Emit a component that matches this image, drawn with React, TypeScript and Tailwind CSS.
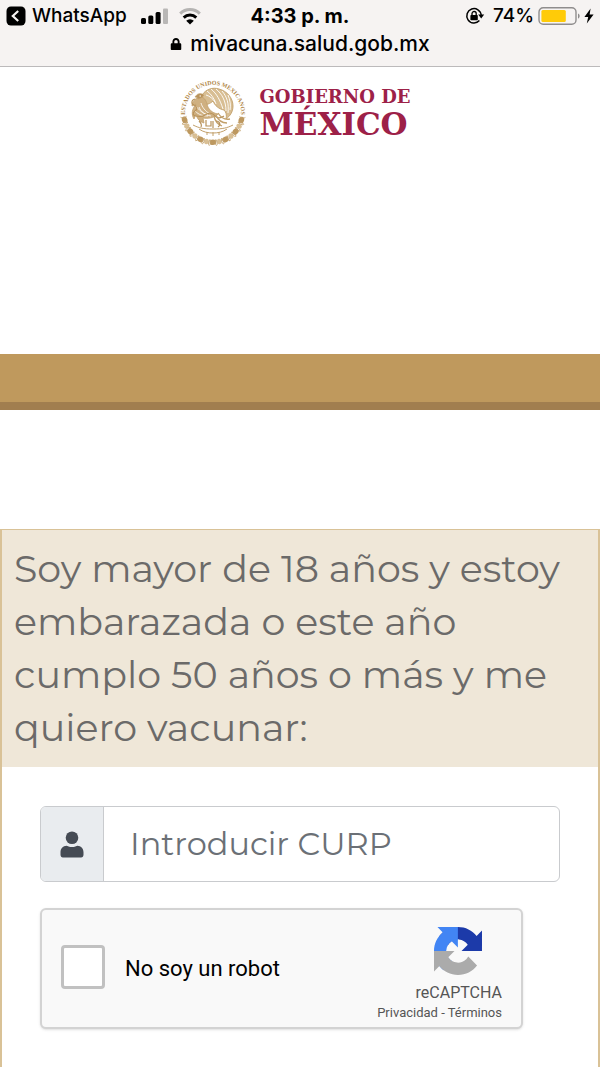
import { useState } from "react";
import { FaLock } from "react-icons/fa";

const beads = Array.from({ length: 13 }, (_, i) => 14 + i * 12.7);

function StatusBar() {
    return (
        <div className="grid grid-cols-[1fr_auto_1fr] items-center h-8 px-1.5 text-xl leading-6">
            <div className="flex items-center gap-1.5">
                <svg viewBox="0 0 20 20" className="w-5 h-5" aria-hidden="true">
                    <rect x="0.5" y="0.5" width="19" height="19" rx="4.5" fill="#000" />
                    <path d="M12.2 5 6.8 10l5.4 5" fill="none" stroke="#f6f3f2" strokeWidth="2.2" />
                </svg>
                <a href="#" className="text-[19px] leading-6 font-medium">WhatsApp</a>
                <svg viewBox="0 0 28 18" className="w-7 h-[18px] ml-2" aria-hidden="true">
                    <rect x="0" y="11" width="5" height="6" rx="1.5" fill="#000" />
                    <rect x="7.3" y="8.5" width="5" height="8.5" rx="1.5" fill="#000" />
                    <rect x="14.6" y="5" width="5" height="12" rx="1.5" fill="#000" />
                    <rect x="22" y="1.5" width="5" height="15.5" rx="1" fill="#b9b7b6" />
                </svg>
                <svg viewBox="0 0 22 17" className="w-[22px] h-[17px] ml-1" aria-hidden="true">
                    <path d="M1.2 5.6a14 14 0 0 1 19.6 0" fill="none" stroke="#b5b3b2" strokeWidth="3" />
                    <path d="M4.7 9.6a9.2 9.2 0 0 1 12.6 0" fill="none" stroke="#000" strokeWidth="3" />
                    <path d="M11 16.5 7.2 12.7a5.4 5.4 0 0 1 7.6 0z" fill="#000" />
                </svg>
            </div>
            <div className="font-bold">4:33 p. m.</div>
            <div className="flex items-center justify-end">
                <svg viewBox="0 0 20 18" className="w-5 h-[18px] mr-2" aria-hidden="true">
                    <path d="M14.4 13.6A7.2 7.2 0 1 1 16.2 8.2" fill="none" stroke="#000" strokeWidth="1.5" />
                    <path d="M13.2 7.6h6l-3 4z" fill="#000" />
                    <rect x="5.4" y="8" width="7.4" height="5.2" rx="0.8" fill="#000" />
                    <path d="M7 8.4V6.6a2.1 2.1 0 0 1 4.2 0v1.8" fill="none" stroke="#000" strokeWidth="1.3" />
                </svg>
                <span className="text-[19px] leading-6 font-medium">74%</span>
                <svg viewBox="0 0 42 20" className="w-[42px] h-5 ml-1" aria-hidden="true">
                    <rect x="1" y="1.7" width="37" height="16.6" rx="4.2" fill="none" stroke="#8f8d8d" strokeWidth="1.4" />
                    <rect x="3.4" y="4" width="24.4" height="12" rx="1.5" fill="#ffcb08" />
                    <path d="M40 7.4c2.2 1 2.2 4.2 0 5.2z" fill="#8f8d8d" />
                </svg>
                <svg viewBox="0 0 10 16" className="w-2.5 h-4 ml-1" aria-hidden="true">
                    <path d="M6.6.6.4 9h3.8L2.8 15.4 9.6 6.4H5.6z" fill="#000" />
                </svg>
            </div>
        </div>
    );
}

function Seal() {
    return (
        <svg viewBox="0 0 68 68" className="w-[68px] h-[68px]" fill="none" stroke="#c2a06b" aria-hidden="true">
            <defs>
                <path id="seal-arc" d="M7.2 42A28 28 0 1 1 60.8 42" />
            </defs>
            <text fill="#b08648" stroke="none" fontSize="6" fontFamily="'Liberation Serif', serif" fontWeight="700">
                <textPath href="#seal-arc" startOffset="50%" textAnchor="middle">ESTADOS UNIDOS MEXICANOS</textPath>
            </text>
            {/* lower wreath */}
            {beads.map((angle, i) => (
                <g key={angle} transform={`rotate(${angle} 34 34)`}>
                    <ellipse cx="63.2" cy="34" rx="2.8" ry={i % 2 ? 2.2 : 3.4} fill={i % 2 ? "#d9bf94" : "#bd985f"} stroke="none" />
                    <path d="M60.5 31c2 1 5 1 6-.5M60.5 37c2-1 5-1 6 .5" strokeWidth="0.8" />
                </g>
            ))}
            {/* eagle: wings and tail */}
            <g transform="translate(-1 -2)">
                <path d="M24 18c4-6 11-8 17-6 8 2 14 9 14 17 0 6-3 10-7 13 1-4 0-7-2-9-5-1-9-4-11-9-3 3-7 4-9 3z" fill="#d8be93" strokeWidth="0.9" />
                <path d="M33 12c6 5 9 11 12 20M38 12c6 5 10 12 10 22M44 14c5 6 7 12 6 22M29 14c4 3 7 7 9 13M28 18c4 1 7 4 9 7M50 18c2 5 3 10 2 15" stroke="#fff" strokeWidth="0.9" />
                <path d="M22 20c-5 1-8 5-8 9l4-2c-4 5-5 10-2 15l2-5c1 5 4 8 8 9l-1-5c5 1 11 0 15-4-6-1-10-5-11-10-1-4-3-7-7-7z" fill="#cfb081" strokeWidth="0.8" />
                <path d="M18 29c3 4 6 7 12 9M17 34c4 4 8 5 13 5M23 26c1 4 4 8 9 11M21 30c2 5 6 8 12 9" stroke="#fff" strokeWidth="0.8" />
                {/* head, beak and snake */}
                <path d="M24 17c-3-1-5 0-7 3 2 0 3 1 3 2 3-1 5-2 6-4" fill="#b8925a" strokeWidth="0.7" />
                <circle cx="22.2" cy="19" r="0.7" fill="#fff" stroke="none" />
                <path d="M17 22c-4 1-4 5-1 6s4 4 1 6-2 5 1 5 5 2 9-1 8-2 10 1 6 2 9 0" stroke="#b8925a" strokeWidth="1.1" />
                <path d="M40 36c3 5 7 7 12 6M38 38c2 5 6 8 11 8M36 39c1 5 3 8 8 10" strokeWidth="1.3" />
            </g>
            {/* cactus and rock */}
            <path d="M27 41v6h5v-5M34 42v7M37 42c4 0 5 4 2 6M20 42c2 2 3 4 2 6" stroke="#b8925a" strokeWidth="1.2" />
            <path d="M14 46c6 3 10 4 20 4s14-1 20-4M20 50c4 3 9 4 14 4s10-1 14-4M28 53v3M34 53v4M40 53v3" strokeWidth="1" />
        </svg>
    );
}

function RecaptchaLogo() {
    return (
        <svg viewBox="0 0 64 64" className="w-12 h-12" aria-hidden="true">
            <path d="M64 31.955l-.033-1.37V4.687l-7.16 7.16C50.948 4.674 42.033.093 32.05.093c-10.4 0-19.622 4.96-25.458 12.64l11.736 11.86a15.55 15.55 0 0 1 4.754-5.334c2.05-1.6 4.952-2.906 8.968-2.906.485 0 .86.057 1.135.163 4.976.393 9.288 3.14 11.828 7.124l-8.307 8.307L64 31.953" fill="#1c3aa9" />
            <path d="M31.862.094l-1.37.033H4.594l7.16 7.16C4.58 13.147 0 22.06 0 32.046c0 10.4 4.96 19.622 12.64 25.458L24.5 45.768a15.55 15.55 0 0 1-5.334-4.754c-1.6-2.05-2.906-4.952-2.906-8.968 0-.485.057-.86.163-1.135.393-4.976 3.14-9.288 7.124-11.828l8.307 8.307L31.86.095" fill="#4285f4" />
            <path d="M.001 32.045l.033 1.37v25.898l7.16-7.16c5.86 7.173 14.774 11.754 24.76 11.754 10.4 0 19.622-4.96 25.458-12.64l-11.736-11.86a15.55 15.55 0 0 1-4.754 5.334c-2.05 1.6-4.952 2.906-8.968 2.906-.485 0-.86-.057-1.135-.163-4.976-.393-9.288-3.14-11.828-7.124l8.307-8.307c-10.522.04-22.4.066-27.295-.005" fill="#ababab" />
        </svg>
    );
}

export default function App() {
    const [curp, setCurp] = useState("");
    const [checked, setChecked] = useState(false);

    return (
        <div className="min-h-screen flex flex-col bg-white">
            {/* Browser chrome */}
            <header className="h-[67px] bg-[#f6f3f2] border-b border-[#bcbabb] text-black font-['Inter',sans-serif]">
                <StatusBar />
                <div className="flex items-center justify-center gap-2 text-[21px] leading-6 font-medium">
                    <FaLock size={12} />
                    <span>mivacuna.salud.gob.mx</span>
                </div>
            </header>

            {/* Government logo */}
            <div className="flex justify-center gap-3 pt-3 pr-2.5 pb-[207px]">
                <Seal />
                <div className="pt-2 text-[#9d2148] font-bold font-['DejaVu_Serif',serif]">
                    <div className="text-lg leading-5">GOBIERNO DE</div>
                    <div className="text-[31px] leading-[34px]">MÉXICO</div>
                </div>
            </div>

            <div className="h-14 bg-[#bf995d] border-b-8 border-[#a17e4f]" />

            <main className="flex-1 flex flex-col pt-[119px]">
                <form className="flex-1 border-x-2 border-t border-[#d9c297]" onSubmit={(e) => e.preventDefault()}>
                    <label htmlFor="curp" className="block bg-[#efe7d8] px-3 pt-3 pb-[13px] text-[#6b6a69] text-[38px] leading-[53px] font-['Montserrat','DejaVu_Sans',sans-serif]">
                        Soy mayor de 18 años y estoy embarazada o este año cumplo 50 años o más y me quiero vacunar:
                    </label>

                    <div className="px-[38px] pt-[39px] pb-8">
                        <div className="flex h-[76px] border border-[#c9cbce] rounded-md overflow-hidden">
                            <div className="w-[63px] shrink-0 flex items-center justify-center bg-[#e9ecef] border-r border-[#c9cbce]">
                                <svg viewBox="0 0 24 27" className="w-6 h-[27px]" fill="#454b54" aria-hidden="true">
                                    <circle cx="12" cy="6.8" r="6.3" />
                                    <path d="M6.8 14.8c3 1.6 7.4 1.6 10.4 0 4.2.2 6.3 3 6.3 6.4v2.6c0 1.6-.9 2.6-2.4 2.6H2.9c-1.5 0-2.4-1-2.4-2.6v-2.6c0-3.4 2.1-6.2 6.3-6.4z" />
                                </svg>
                            </div>
                            <input
                                id="curp"
                                type="text"
                                value={curp}
                                onChange={(e) => setCurp(e.target.value)}
                                placeholder="Introducir CURP"
                                className="flex-1 min-w-0 px-[26px] text-[32px] text-[#6b7076] placeholder:text-[#6b7076] font-['Montserrat','DejaVu_Sans',sans-serif] focus:outline-none"
                            />
                        </div>

                        <div className="mt-[26px] max-w-[483px] h-[121px] flex items-center justify-between px-[19px] bg-[#f9f9f9] border-2 border-[#d3d3d3] rounded-md shadow-sm font-['Roboto',sans-serif]">
                            <label htmlFor="robot" className="flex items-center gap-5 pb-1 text-[22px] leading-7 text-black">
                                <input
                                    id="robot"
                                    type="checkbox"
                                    checked={checked}
                                    onChange={(e) => setChecked(e.target.checked)}
                                    className="appearance-none w-11 h-11 bg-white border-3 border-[#c1c1c1] rounded-sm checked:bg-[#4285f4]"
                                />
                                <span className="pt-1">No soy un robot</span>
                            </label>
                            <div className="flex flex-col items-end pt-2.5 text-[#555]">
                                <div className="pr-5">
                                    <RecaptchaLogo />
                                </div>
                                <div className="pt-1.5 text-base leading-6">reCAPTCHA</div>
                                <div className="text-[13px] leading-4">
                                    <a href="#">Privacidad</a> - <a href="#">Términos</a>
                                </div>
                            </div>
                        </div>
                    </div>
                </form>
            </main>
        </div>
    );
}
